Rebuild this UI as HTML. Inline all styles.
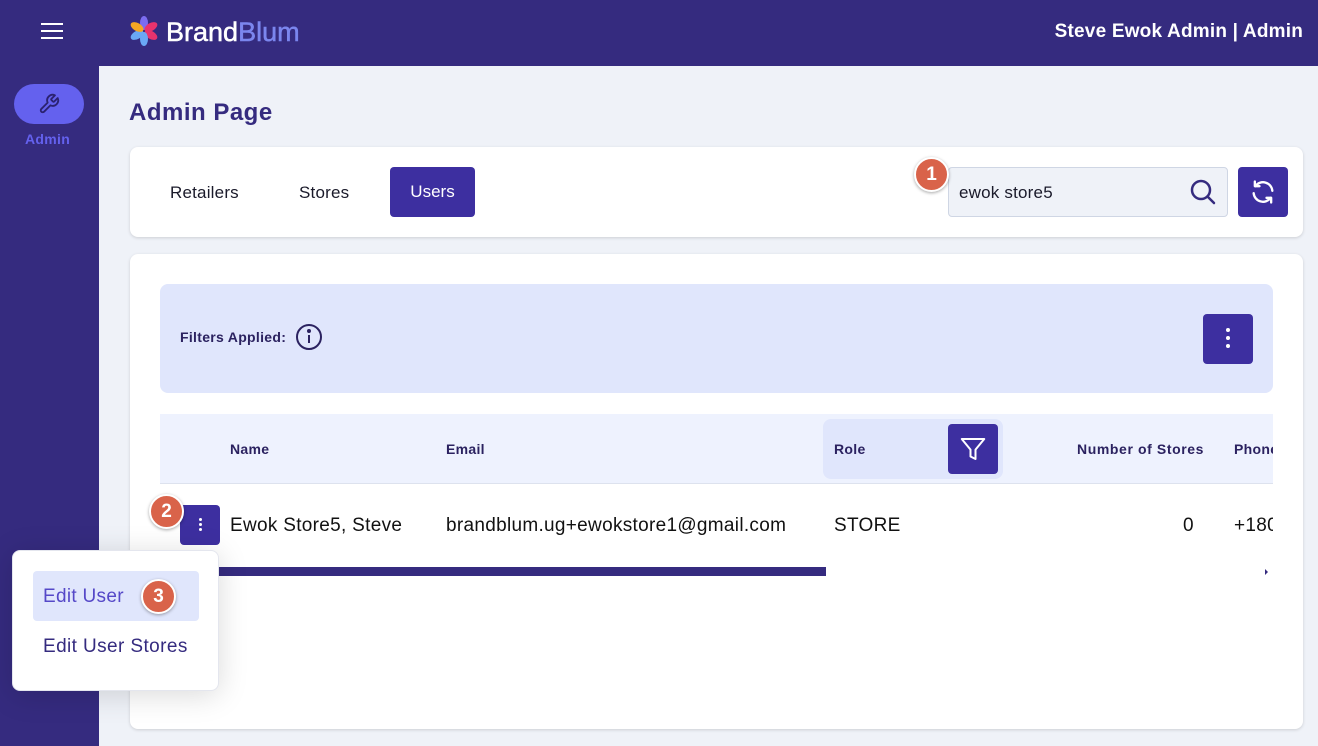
<!DOCTYPE html>
<html><head><style>
*{box-sizing:border-box;margin:0;padding:0}
body{width:1318px;height:746px;overflow:hidden;background:#eff2f8;font-family:"Liberation Sans",sans-serif;position:relative}
.abs{position:absolute}
.badge{position:absolute;width:35px;height:35px;border-radius:50%;background:#d9634a;border:2px solid #fff;box-shadow:0 1px 3px rgba(0,0,0,.35);color:#fff;font-weight:bold;font-size:19px;display:flex;align-items:center;justify-content:center}
.b{font-size:19px;color:#111;letter-spacing:0.3px;white-space:nowrap}
.h{font-size:14px;font-weight:bold;color:#2b2260;letter-spacing:0.3px;white-space:nowrap}
</style></head><body>
<div class="abs" style="left:0;top:0;width:1318px;height:66px;background:#352b7f"></div>
<div class="abs" style="left:0;top:0;width:99px;height:746px;background:#352b7f"></div>
<div class="abs" style="left:41px;top:23px;width:22px;height:2px;background:#fff;box-shadow:0 7px 0 #fff,0 14px 0 #fff"></div>
<svg class="abs" style="left:128px;top:15px" width="32" height="32" viewBox="0 0 32 32">
<g transform="translate(16,16)">
<ellipse rx="4" ry="7" cy="-8" fill="#7b6cf0" transform="rotate(0)"/>
<ellipse rx="4" ry="7" cy="-8" fill="#e8336d" transform="rotate(60)"/>
<ellipse rx="4" ry="7" cy="-8" fill="#e8336d" transform="rotate(120)"/>
<ellipse rx="4" ry="7" cy="-8" fill="#6aa8f5" transform="rotate(180)"/>
<ellipse rx="4" ry="7" cy="-8" fill="#6aa8f5" transform="rotate(240)"/>
<ellipse rx="4" ry="7" cy="-8" fill="#f5a623" transform="rotate(300)"/>
</g></svg>
<div class="abs" style="left:166px;top:17px;font-size:27px;color:#fff;-webkit-text-stroke:0.5px #fff">Brand<span style="color:#7b86ee;-webkit-text-stroke:0.5px #7b86ee">Blum</span></div>
<div class="abs" style="right:15px;top:21px;font-size:19px;font-weight:bold;color:#fff;letter-spacing:0.2px">Steve Ewok Admin | Admin</div>
<div class="abs" style="left:14px;top:84px;width:70px;height:40px;border-radius:20px;background:#6461ee"></div>
<svg class="abs" style="left:38px;top:93px" width="22" height="22" viewBox="0 0 24 24" fill="none" stroke="#2b2270" stroke-width="2" stroke-linecap="round" stroke-linejoin="round"><path d="M14.7 6.3a1 1 0 000 1.4l1.6 1.6a1 1 0 001.4 0l3.77-3.77a6 6 0 01-7.94 7.94l-6.91 6.91a2.12 2.12 0 01-3-3l6.91-6.91a6 6 0 017.94-7.94l-3.76 3.76z"/></svg>
<div class="abs" style="left:25px;top:131px;font-size:14px;font-weight:bold;color:#6461ee;letter-spacing:0.3px">Admin</div>
<div class="abs" style="left:129px;top:99px;font-size:24px;font-weight:bold;color:#352b7f;letter-spacing:0.5px">Admin Page</div>
<div class="abs" style="left:130px;top:147px;width:1173px;height:90px;background:#fff;border-radius:8px;box-shadow:0 1px 3px rgba(0,0,0,.15)"></div>
<div class="abs" style="left:170px;top:183px;font-size:17px;color:#1a1a2a;letter-spacing:0.2px">Retailers</div>
<div class="abs" style="left:299px;top:183px;font-size:17px;color:#1a1a2a;letter-spacing:0.2px">Stores</div>
<div class="abs" style="left:390px;top:167px;width:85px;height:50px;background:#3d2fa0;border-radius:4px;color:#fff;font-size:17px;display:flex;align-items:center;justify-content:center">Users</div>
<div class="abs" style="left:948px;top:167px;width:280px;height:50px;background:#eff2f8;border:1px solid #cfd6e4;border-radius:4px"></div>
<div class="abs" style="left:959px;top:183px;font-size:17px;color:#1a1a2a;letter-spacing:0.2px">ewok store5</div>
<svg class="abs" style="left:1188px;top:177px" width="30" height="30" viewBox="0 0 30 30" fill="none" stroke="#352b7f" stroke-width="2.5" stroke-linecap="round"><circle cx="13" cy="13" r="9"/><path d="M20 20l6 6"/></svg>
<div class="badge" style="left:914px;top:157px">1</div>
<div class="abs" style="left:1238px;top:167px;width:50px;height:50px;background:#3d2fa0;border-radius:4px"></div>
<svg class="abs" style="left:1249px;top:178px" width="28" height="28" viewBox="0 0 24 24" fill="none" stroke="#fff" stroke-width="2" stroke-linecap="round" stroke-linejoin="round"><path d="M20 11A8 8 0 005.5 7M4 13a8 8 0 0014.5 4"/><path d="M5 3v4h4M19 21v-4h-4"/></svg>
<div class="abs" style="left:130px;top:254px;width:1173px;height:475px;background:#fff;border-radius:8px;box-shadow:0 1px 3px rgba(0,0,0,.15)"></div>
<div class="abs" style="left:160px;top:284px;width:1113px;height:109px;background:#e0e6fc;border-radius:8px"></div>
<div class="abs h" style="left:180px;top:329px">Filters Applied:</div>
<svg class="abs" style="left:295px;top:323px" width="28" height="28" viewBox="0 0 28 28" fill="none" stroke="#2b2260" stroke-width="2"><circle cx="14" cy="14" r="12"/><path d="M14 12v8"/><circle cx="14" cy="8" r="1" fill="#2b2260"/></svg>
<div class="abs" style="left:1203px;top:314px;width:50px;height:50px;background:#3d2fa0;border-radius:4px"></div>
<div class="abs" style="left:1226px;top:328px;width:4px;height:4px;border-radius:50%;background:#fff;box-shadow:0 8px 0 #fff,0 16px 0 #fff"></div>
<div class="abs" style="left:160px;top:414px;width:1113px;height:70px;background:#eef2fe;border-bottom:1px solid #dde2ee"></div>
<div class="abs" style="left:823px;top:419px;width:180px;height:60px;background:#e0e6fc;border-radius:8px"></div>
<div class="abs" style="left:948px;top:424px;width:50px;height:50px;background:#3d2fa0;border-radius:4px"></div>
<svg class="abs" style="left:958px;top:434px" width="30" height="30" viewBox="0 0 24 24" fill="none" stroke="#fff" stroke-width="1.6" stroke-linejoin="round"><path d="M3 4h18l-7 8.5V20l-4-2v-5.5z"/></svg>
<div class="abs h" style="left:230px;top:441px">Name</div>
<div class="abs h" style="left:446px;top:441px">Email</div>
<div class="abs h" style="left:834px;top:441px">Role</div>
<div class="abs h" style="left:1077px;top:441px;letter-spacing:0.6px">Number of Stores</div>
<div class="abs h" style="left:1234px;top:441px;width:39px;overflow:hidden">Phone</div>
<div class="abs" style="left:180px;top:505px;width:40px;height:40px;background:#3d2fa0;border-radius:4px"></div>
<div class="abs" style="left:199px;top:518px;width:3px;height:3px;border-radius:50%;background:#fff;box-shadow:0 5px 0 #fff,0 10px 0 #fff"></div>
<div class="badge" style="left:149px;top:494px">2</div>
<div class="abs b" style="left:230px;top:515px">Ewok Store5, Steve</div>
<div class="abs b" style="left:446px;top:515px">brandblum.ug+ewokstore1@gmail.com</div>
<div class="abs b" style="left:834px;top:515px">STORE</div>
<div class="abs b" style="left:1183px;top:515px">0</div>
<div class="abs b" style="left:1234px;top:515px;width:39px;overflow:hidden">+1800</div>
<div class="abs" style="left:160px;top:567px;width:666px;height:9px;background:#352b7f"></div>
<div class="abs" style="left:1265px;top:569px;width:0;height:0;border-left:3px solid #352b7f;border-top:3px solid transparent;border-bottom:3px solid transparent"></div>
<div class="abs" style="left:12px;top:550px;width:207px;height:141px;background:#fff;border-radius:8px;box-shadow:0 4px 30px rgba(0,0,0,.15);border:1px solid #e4e6ee"></div>
<div class="abs" style="left:33px;top:571px;width:166px;height:50px;background:#e0e6fc;border-radius:4px"></div>
<div class="abs" style="left:43px;top:586px;font-size:19px;color:#5548c8;letter-spacing:0.3px">Edit User</div>
<div class="badge" style="left:141px;top:579px">3</div>
<div class="abs" style="left:43px;top:636px;font-size:19px;color:#352b7f;letter-spacing:0.4px">Edit User Stores</div>
</body></html>
